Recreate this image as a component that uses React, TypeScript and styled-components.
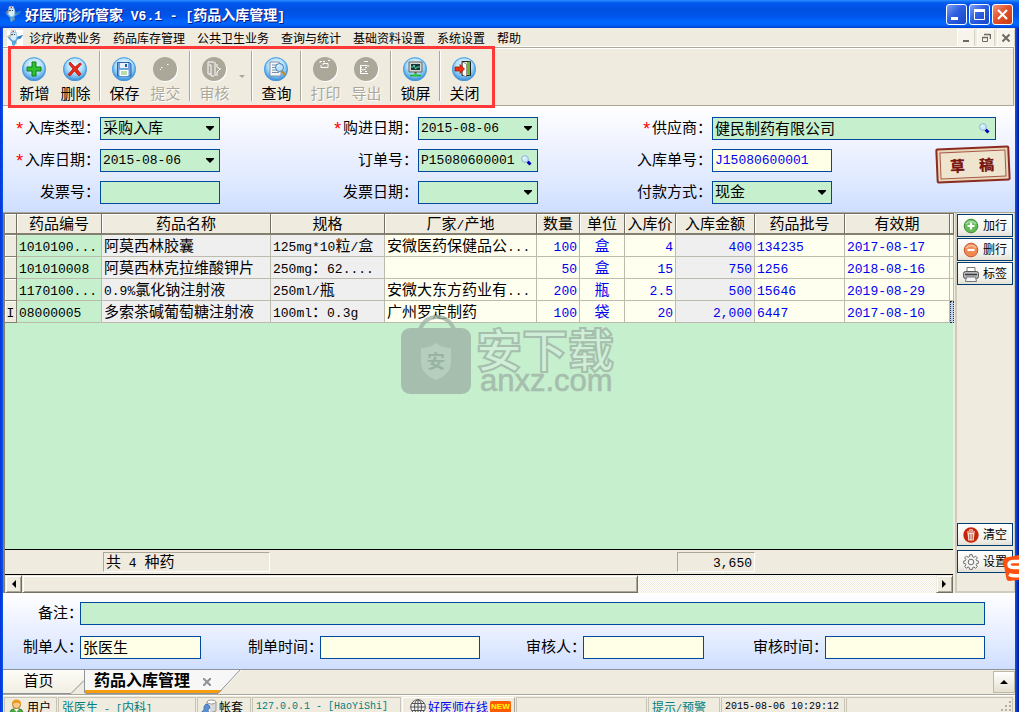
import React from "react";
import styled, { createGlobalStyle, css } from "styled-components";

const CJK = `"Noto Sans CJK SC", sans-serif`;
const MONO = `"Liberation Mono", "Noto Sans CJK SC", monospace`;
const GREEN = "#c6efce";
const CREAM = "#ffffe7";
const FACE = "#efebde";
const NAVY = "#00499c";

const Global = createGlobalStyle`
  * { box-sizing: border-box; }
  body { margin: 0; font-family: ${CJK}; font-size: 15px; color: #000; }
  button, input, select { font: inherit; color: inherit; margin: 0; padding: 0; border: 0; background: none; border-radius: 0; }
  svg { display: block; flex: none; }
`;

/* ---------- window frame ---------- */
const Window = styled.div`
  position: relative;
  display: flex;
  flex-direction: column;
  height: 100vh;
  min-height: 600px;
  overflow: hidden;
  background: linear-gradient(90deg, #0831d9, #0855e8 3px, #0855e8 calc(100% - 4px), #0a48e0 calc(100% - 3px), #00138c);
`;
const TitleBar = styled.header`
  display: flex;
  align-items: center;
  height: 28px;
  padding: 0 6px 0 5px;
  gap: 4px;
  background: linear-gradient(#2a8cff, #0058ee 3px, #0050e0 9px, #0055ea 16px, #0066ff 22px, #0062fa 25px, #003dd0);
`;
const Title = styled.h1`
  flex: 1;
  margin: 0;
  font-size: 14px;
  line-height: 22px;
  font-weight: 700;
  color: #fff;
  text-shadow: 1px 1px 0 #0a1883;
  white-space: pre;
`;
const TitleButtons = styled.div`
  display: flex;
  gap: 2px;
`;
const TitleButton = styled.button<{ $red?: boolean }>`
  display: grid;
  place-items: center;
  width: 21px;
  height: 21px;
  border: 1px solid #fff;
  border-radius: 3px;
  background: ${(p) =>
    p.$red
      ? "linear-gradient(135deg, #f0977c, #e2532e 45%, #c83a10)"
      : "linear-gradient(135deg, #7d9ff5, #2d5fe0 45%, #1746c8)"};
`;
const Body = styled.div`
  flex: 1;
  min-height: 0;
  display: flex;
  flex-direction: column;
  margin: 0 4px 0 3px;
  background: ${FACE};
`;

/* ---------- menu and toolbar ---------- */
const MenuBar = styled.nav`
  display: flex;
  align-items: center;
  height: 19px;
  padding-left: 4px;
  gap: 6px;
  font-size: 12px;
`;
const MenuItems = styled.div`
  flex: 1;
  display: flex;
  gap: 12px;
`;
const MenuItem = styled.button`
  line-height: 18px;
  white-space: nowrap;
`;
const MdiButtons = styled.div`
  display: flex;
  gap: 2px;
`;
const MdiButton = styled.button`
  display: grid;
  place-items: center;
  width: 18px;
  height: 18px;
  background: #f7f4ec;
  border: 1px solid;
  border-color: #fff #d6d2c4 #d6d2c4 #fff;
`;
const Toolbar = styled.div`
  display: flex;
  height: 59px;
  margin-right: 1px;
  padding: 3px 11px;
  border: 1px solid #aca899;
  border-left: 0;
  box-shadow: inset 0 1px #fff, 0 -1px #fff;
`;
const ToolButton = styled.button`
  display: flex;
  flex-direction: column;
  align-items: center;
  width: 41px;
  padding-top: 6px;
  gap: 1px;
  line-height: 20px;
  &:disabled { color: #aca899; text-shadow: 1px 1px #fff; }
`;
const ToolArrow = styled.button`
  width: 13px;
  display: grid;
  place-items: center;
`;
const Separator = styled.div`
  width: 8px;
  height: 50px;
  &::before {
    content: "";
    display: block;
    width: 2px;
    height: 100%;
    margin-left: 3px;
    background: linear-gradient(90deg, #aca899 50%, #fff 50%);
  }
`;
const Highlight = styled.div`
  position: absolute;
  left: 8px;
  top: 46px;
  width: 487px;
  height: 62px;
  border: 3px solid #ff3838;
  pointer-events: none;
  z-index: 3;
`;

/* ---------- forms ---------- */
const formShade = css`
  background: linear-gradient(#fff, #eef2ff 40%, #dde8ff 75%, #cedeff);
`;
const HeadForm = styled.form`
  ${formShade}
  position: relative;
  display: grid;
  grid-template-columns: 97px 120px 198px 120px 174px minmax(120px, 1fr);
  grid-auto-rows: 23px;
  row-gap: 9px;
  padding: 11px 19px 8px 0;
`;
const Label = styled.label`
  display: flex;
  justify-content: flex-end;
  line-height: 20px;
  white-space: nowrap;
`;
const Star = styled.span`
  color: #f00;
  font-family: ${MONO};
  font-size: 18px;
  line-height: 26px;
`;
const Box = styled.div<{ $cream?: boolean; $narrow?: boolean }>`
  display: flex;
  align-items: center;
  height: 23px;
  width: ${(p) => (p.$narrow ? "120px" : "auto")};
  min-width: 0;
  padding: 0 5px 0 2px;
  border: 1px solid ${NAVY};
  background: ${(p) => (p.$cream ? CREAM : GREEN)};
`;
const boxText = css<{ $mono?: boolean; $blue?: boolean }>`
  flex: 1;
  min-width: 0;
  width: 0;
  height: 21px;
  padding-bottom: ${(p) => (p.$mono ? 0 : 3)}px;
  line-height: 18px;
  outline: none;
  font-family: ${(p) => (p.$mono ? MONO : CJK)};
  font-size: ${(p) => (p.$mono ? "13px" : "15px")};
  color: ${(p) => (p.$blue ? "#0000f0" : "#000")};
`;
const TextInput = styled.input`${boxText}`;
const Select = styled.select`
  ${boxText}
  appearance: none;
`;
const IconButton = styled.button`
  display: grid;
  place-items: center;
`;
const Stamp = styled.svg`
  position: absolute;
  right: 3px;
  top: 38px;
`;
const FootForm = styled.form`
  ${formShade}
  display: grid;
  grid-template-columns: 77px 121px 119px 160px 103px 121px 121px minmax(120px, 1fr);
  grid-auto-rows: 23px;
  row-gap: 11px;
  padding: 9px 30px 10px 0;
  ${Label} { margin-right: -3px; }
`;
const Wide = styled.div`
  grid-column: 2 / -1;
`;

/* ---------- data grid ---------- */
const Work = styled.div`
  flex: 1;
  min-height: 0;
  display: flex;
  gap: 2px;
  border-top: 1px solid #aca899;
`;
const GridPane = styled.div`
  position: relative;
  flex: 1;
  min-width: 0;
  display: flex;
  flex-direction: column;
  border-left: 2px solid #848070;
  background: ${GREEN};
`;
const Table = styled.table`
  width: 100%;
  table-layout: fixed;
  border-collapse: separate;
  border-spacing: 0;
`;
const Th = styled.th`
  height: 22px;
  padding: 0;
  font-weight: 400;
  line-height: 18px;
  vertical-align: top;
  white-space: nowrap;
  overflow: hidden;
  background: ${FACE};
  border-top: 1px solid #736f63;
  border-right: 1px solid #736f63;
  border-bottom: 2px solid #848070;
  box-shadow: inset 1px 1px #fff;
`;
type Tone = "green" | "grey" | "cream" | "face";
const tones: Record<Tone, string> = { green: GREEN, grey: "#efefef", cream: "#fffff0", face: FACE };
const Td = styled.td<{ $tone: Tone; $blue?: boolean; $align?: "left" | "right" | "center" }>`
  height: 22px;
  padding: 0 2px;
  line-height: 20px;
  vertical-align: top;
  white-space: nowrap;
  overflow: hidden;
  background: ${(p) => tones[p.$tone]};
  color: ${(p) => (p.$blue ? "#0000f0" : "#000")};
  text-align: ${(p) => p.$align ?? "left"};
  border-right: 1px solid ${(p) => (p.$tone === "face" ? "#848070" : "#bdbaae")};
  border-bottom: 1px solid ${(p) => (p.$tone === "face" ? "#848070" : "#bdbaae")};
  ${(p) => p.$tone === "face" && "box-shadow: inset 1px 1px #fff; padding: 0;"}
`;
const TailTd = styled(Td)<{ $focus: boolean }>`
  padding: 0;
  ${(p) => p.$focus && "background: #b9d2f7; border: 1px dotted #31312a;"}
`;
const Latin = styled.span<{ $size?: number }>`
  font-family: ${MONO};
  font-size: ${(p) => p.$size ?? 13}px;
  line-height: 0;
  white-space: pre;
`;
const Totals = styled.div`
  display: grid;
  grid-template-columns: 98px 167px 407px 78px 1fr;
  height: 26px;
  margin-top: auto;
  padding-top: 2px;
  border-top: 1px solid #000;
  border-bottom: 1px solid #000;
  background: ${FACE};
`;
const Total = styled.div<{ $col: number; $right?: boolean }>`
  grid-column: ${(p) => p.$col};
  height: 20px;
  padding: 0 2px;
  line-height: 16px;
  text-align: ${(p) => (p.$right ? "right" : "left")};
  border: 1px solid;
  border-color: #aca899 #fff #fff #aca899;
`;
const ScrollBar = styled.div`
  display: flex;
  height: 18px;
  background: repeating-conic-gradient(#fff 0 25%, ${FACE} 0 50%) 0 0 / 2px 2px;
`;
const raised = css`
  background: ${FACE};
  border: 1px solid;
  border-color: ${FACE} #736f63 #736f63 ${FACE};
  box-shadow: inset 1px 1px #fff, inset -1px -1px #aca899;
`;
const ScrollArrow = styled.button`
  ${raised}
  display: grid;
  place-items: center;
  width: 17px;
`;
const Thumb = styled.div`
  ${raised}
  width: 65%;
`;
const Gap = styled.div`
  flex: 1;
`;
const Side = styled.aside`
  display: flex;
  flex-direction: column;
  gap: 1px;
  width: 60px;
  padding: 1px 1px 18px 0;
  border-left: 2px solid #cfcbbd;
  border-right: 1px solid #cfcbbd;
  border-bottom: 2px solid #cfcbbd;
`;
const SideButton = styled.button<{ $bottom?: boolean }>`
  display: flex;
  align-items: center;
  height: 23px;
  padding-left: 5px;
  gap: 4px;
  font-size: 12px;
  line-height: 18px;
  white-space: nowrap;
  border: 1px solid #003c74;
  background: linear-gradient(#fff, #f3f2ec 70%, #e4e1d5);
  margin-top: ${(p) => (p.$bottom ? "auto" : "0")};
  margin-bottom: ${(p) => (p.$bottom ? "3px" : "0")};
`;
const SideText = styled.span`
  padding-bottom: 2px;
`;
const Watermark = styled.svg`
  position: absolute;
  left: 395px;
  top: 101px;
  pointer-events: none;
`;
const ImeBadge = styled.svg`
  position: absolute;
  right: 0;
  bottom: 130px;
  z-index: 3;
`;

/* ---------- document tabs and status bar ---------- */
const Tabs = styled.div`
  position: relative;
  display: flex;
  height: 25px;
  border-top: 1px solid #8e949c;
`;
const HomeTab = styled.button`
  width: 81px;
  padding: 0 10px 4px 0;
  line-height: 20px;
  background: linear-gradient(#fdfcf6, #f1eee2);
  clip-path: polygon(0 0, 100% 0, 100% 9px, 68px 23px, 0 23px);
`;
const ActiveTab = styled.div`
  display: flex;
  align-items: flex-start;
  width: 158px;
  padding-left: 9px;
  gap: 13px;
  border-left: 1px solid #8e949c;
  background: linear-gradient(#f7f7f7 20px, #f89c10 20px);
  clip-path: polygon(0 0, 100% 0, 135px 23px, 0 23px);
`;
const TabName = styled.button`
  font-size: 16px;
  font-weight: 700;
  line-height: 18px;
  white-space: nowrap;
`;
const TabClose = styled.button`
  padding-top: 8px;
`;
const TabEdges = styled.svg`
  position: absolute;
  left: 0;
  top: 0;
  pointer-events: none;
`;
const TabMenu = styled.button`
  display: grid;
  place-items: center;
  width: 22px;
  height: 22px;
  margin: 1px 0 0 auto;
  border: 1px solid #bdb9aa;
  background: linear-gradient(#fff, #e4e0d0);
`;
const StatusBar = styled.footer`
  display: grid;
  grid-template-columns: 53px 138px 54px 149px 113px 131px 72px 124px 1fr;
  column-gap: 1px;
  height: 18px;
  padding: 2px 2px 0 1px;
  overflow: hidden;
  border-top: 1px solid #aca899;
  box-shadow: inset 0 1px #fff;
  font-size: 12px;
`;
const Status = styled.div<{ $teal?: boolean; $raised?: boolean }>`
  display: flex;
  align-items: center;
  height: 19px;
  padding-left: ${(p) => (p.$raised ? 7 : 3)}px;
  gap: 2px;
  line-height: 16px;
  white-space: nowrap;
  color: ${(p) => (p.$teal ? "#008080" : "#000")};
  border: 1px solid;
  border-color: ${(p) => (p.$raised ? "#fff #aca899 #aca899 #fff" : "#c9c5b6")};
`;
const OnlineLink = styled.a`
  color: #0000f0;
  text-decoration: none;
`;
const NewTag = styled.span`
  height: 12px;
  padding: 0 1px;
  border-radius: 2px;
  background: #ff5a00;
  color: #ff0;
  font: 700 8px/12px "Liberation Sans", sans-serif;
`;
const Grip = styled.svg`
  margin-left: auto;
`;

/* ---------- drawings ---------- */
const Bird = ({ boxed }: { boxed?: boolean }) => (
  <svg width="16" height="16" viewBox="0 0 16 16">
    {boxed && <rect width="16" height="16" fill="#fff" />}
    <path d="M0 6l5 2 5-1 6-2-2 3-4 2-1 3-2 3-2-1v-3L2 9z" fill="#4f9fd6" />
    <path d="M4 2h5l1 4-1 4-3 1-3-3z" fill="#d9edf9" stroke="#7fb4dc" strokeWidth=".7" />
    <path d="M4 .5h4.500v2H4z" fill="#fff" stroke="#8caac0" strokeWidth=".6" />
    <path d="M5.500 1.500h1.500" stroke="#e22" />
    <path d="M3.500 4.500L1 6l2.500.7z" fill="#f0a020" />
    <path d="M10 7l6-2-3 4z" fill="#2f7cc0" />
    <path d="M6.500 12v3.500M9 12v2.500" stroke="#c9a23a" fill="none" />
    <circle cx="5" cy="4.500" r=".8" fill="#123" />
    <circle cx="7.500" cy="4.500" r=".6" fill="#123" />
  </svg>
);

const Caret = () => (
  <svg width="8" height="5" viewBox="0 0 8 5"><path d="M0 0h8v1l-4 4-4-4z" fill="#000" /></svg>
);

const Lens = () => (
  <svg width="11" height="11" viewBox="0 0 11 11">
    <path d="M6.500 6.500l3 3" stroke="#0000b8" strokeWidth="3" />
    <circle cx="4" cy="4" r="3.400" fill="#cdeafa" stroke="#8fb6d6" />
    <path d="M2.500 4q0-1.500 1.500-1.800" stroke="#fff" fill="none" />
  </svg>
);

type Glyph = "add" | "del" | "save" | "submit" | "audit" | "query" | "print" | "export" | "lock" | "close";
const glyphs: Record<Glyph, React.ReactNode> = {
  add: <path d="M10 5h4v5h5v4h-5v5h-4v-5H5v-4h5z" fill="#2fc02f" stroke="#0c7d1c" />,
  del: <path d="M7 5l5 5 5-4 1.500 1-4.500 5 4 5-2 2-4.500-5L7 19l-2-1.500 5-5.500-4-5z" fill="#f02818" stroke="#a80c04" strokeWidth=".7" />,
  save: (
    <g>
      <path d="M5.500 5.500h12l1.500 1.500v12H5.500z" fill="#6fa3df" stroke="#2a62ad" />
      <path d="M8 6h8v5H8z" fill="#e6f0fb" />
      <path d="M13 7h2v3h-2z" fill="#2c5b9d" />
      <path d="M7.500 13h9v6h-9z" fill="#fff" />
      <path d="M9 15h6M9 17h6" stroke="#6fba50" />
    </g>
  ),
  submit: <path d="M8 10.500h1.500M14 7.500h1.500M7 12.500h1" stroke="#fff" />,
  audit: <path d="M12 5H6v12h3M7 8h2v11h3M13 5v14M15 7v3l3 2-3 3v4M18 12h1" stroke="#fff" fill="none" />,
  query: (
    <g>
      <path d="M6 5h9l2 2v12H6z" fill="#f4f6f8" stroke="#6d7f92" strokeWidth=".8" />
      <path d="M8 8h5M8 10.500h4M8 13h6M8 15.500h7" stroke="#7890a8" />
      <path d="M18 14l3 4" stroke="#c58a28" strokeWidth="2.400" />
      <circle cx="15.500" cy="10.500" r="4" fill="#bce3fa" stroke="#4a7fae" />
      <path d="M13.500 10q.5-2 2-2" stroke="#fff" fill="none" />
    </g>
  ),
  print: <path d="M7 6V4.500h2M10 4.500h2M15 3.500h2M8 8v2.500h7V6.500h-5V8" stroke="#fff" fill="none" />,
  export: <path d="M10 4.500h4M6 8.500h7M14 8v2M6 10.500h2M11 10.500h2M7 12l2 1 3-1M6 14.500h2M11 14.500h2M6 16.500h8M6.500 8v8" stroke="#fff" fill="none" />,
  lock: (
    <g>
      <path d="M6 5h13v10H6z" fill="#d6d6d0" stroke="#5c6266" />
      <path d="M8 7h9v6H8z" fill="#17383a" />
      <path d="M8 10h2l1-2 1.500 4 1.500-2h3" stroke="#5fe6b4" fill="none" strokeWidth=".9" />
      <path d="M12.500 15v3" stroke="#555" strokeWidth="2" />
      <path d="M7 18.500h11" stroke="#18a82c" strokeWidth="1.500" />
      <circle cx="12.500" cy="18" r="1.700" fill="#2fcf3f" />
    </g>
  ),
  close: (
    <g>
      <path d="M10 4.500h8.500v14H10z" fill="#e8f0e4" stroke="#222" />
      <path d="M15 5l3-.5v14l-3-1z" fill="#6cb43c" />
      <path d="M10.500 5l4 2v13l-4-2z" fill="#f7f9f4" stroke="#555" strokeWidth=".6" />
      <path d="M3 10h5V7.500l4.500 4.500L8 16.500V14H3z" fill="#f03010" stroke="#8c1404" strokeWidth=".7" />
    </g>
  ),
};

const ToolIcon = ({ name, off }: { name: Glyph; off?: boolean }) => (
  <svg width="25" height="25" viewBox="0 0 25 25">
    <defs>
      <radialGradient id={`orb-${name}`} cx=".5" cy=".35" r=".65">
        <stop offset="0" stopColor="#f2fbff" />
        <stop offset=".5" stopColor="#b5e0fa" />
        <stop offset=".8" stopColor="#63b0ea" />
        <stop offset="1" stopColor="#2878c8" />
      </radialGradient>
    </defs>
    {off && <circle cx="13" cy="13" r="12" fill="#fff" />}
    <circle cx="12" cy="12" r="12" fill={off ? "#aca899" : `url(#orb-${name})`} />
    {!off && <circle cx="12" cy="12" r="11.300" fill="none" stroke="#4a9de0" />}
    {glyphs[name]}
  </svg>
);

const RoundSign = ({ color, plus }: { color: string; plus?: boolean }) => (
  <svg width="16" height="16" viewBox="0 0 16 16">
    <circle cx="8" cy="8" r="6.800" fill={color} stroke={plus ? "#3c8f35" : "#c8552a"} />
    <path d="M3 6q5-5 10 0" stroke="#fff" strokeOpacity=".4" fill="none" strokeWidth="2" />
    <path d={plus ? "M4.500 8h7M8 4.500v7" : "M4.500 8h7"} stroke="#fff" strokeWidth="2.200" />
  </svg>
);
const Printer = () => (
  <svg width="16" height="16" viewBox="0 0 16 16">
    <path d="M4 6V1.500h8V6" fill="#fff" stroke="#777" />
    <rect x=".5" y="5.500" width="15" height="7" rx="2" fill="#b4b6b8" stroke="#555" />
    <path d="M2 8.500h12" stroke="#3c3c3c" strokeWidth="1.500" />
    <path d="M3.500 11h9l1 4.500h-11z" fill="#f5f5f5" stroke="#777" />
  </svg>
);
const Bin = () => (
  <svg width="16" height="16" viewBox="0 0 16 16">
    <circle cx="8" cy="8" r="7.700" fill="#c82408" />
    <path d="M4.500 6h7l-.8 7.500H5.300z" fill="#f6e2da" />
    <path d="M4 5h8M6 3.500q2-1.500 4 0" stroke="#fff" strokeWidth="1.200" fill="none" />
    <path d="M6.500 7v5.500M8 7v5.500M9.500 7v5.500" stroke="#b05038" strokeWidth=".7" />
  </svg>
);
const Cog = () => (
  <svg width="16" height="16" viewBox="0 0 16 16" fill="none" stroke="#6b6b6b">
    <path d="M6.800.7h2.400l.4 2 1.300.6 1.700-1.200 1.700 1.700-1.200 1.700.6 1.300 2 .4v1.900l-2 .4-.6 1.300 1.200 1.700-1.700 1.700-1.700-1.200-1.300.6-.4 2H6.800l-.4-2-1.300-.6-1.700 1.200-1.700-1.700 1.200-1.700-.6-1.300-2-.4V7.200l2-.4.6-1.300-1.200-1.700 1.700-1.700 1.700 1.200 1.300-.6z" fill="#f4f4f4" />
    <circle cx="8" cy="8" r="2.800" />
  </svg>
);
const Person = () => (
  <svg width="17" height="16" viewBox="-1 0 17 16">
    <path d="M1 15q0-5 4-5h5q4 0 4 5z" fill="#48a83c" stroke="#2c7a28" />
    <path d="M5 10l2.500 3L10 10z" fill="#fff" />
    <circle cx="7.500" cy="5.500" r="4" fill="#f8c98c" stroke="#c07818" />
    <path d="M3 5q0-4.500 4.500-4.500T12 5Q8 2.500 3 5z" fill="#eb9a1c" />
  </svg>
);
const Database = () => (
  <svg width="16" height="16" viewBox="0 0 16 16">
    <path d="M6 3v9q4 3 9 0V3z" fill="#d6d8da" stroke="#9a9a9a" />
    <path d="M8 4v9" stroke="#fff" strokeWidth="2" />
    <ellipse cx="10.500" cy="3" rx="4.500" ry="2" fill="#fff" stroke="#999" />
    <path d="M5 5q4 0 4 4l-2 2 2 5H0q0-4 3-5-1-4 2-6z" fill="#5a8fd4" stroke="#315f9f" strokeWidth=".6" />
  </svg>
);
const Globe = () => (
  <svg width="16" height="16" viewBox="0 0 16 16" fill="none" stroke="#555">
    <circle cx="8" cy="8" r="7.300" fill="#f3f3f3" />
    <ellipse cx="8" cy="8" rx="3.500" ry="7.300" />
    <path d="M8 .7v14.600M.7 8h14.600M2 4.500h12M2 11.500h12" />
  </svg>
);

/* Latin runs sit in a narrow monospaced face beside the square characters. */
const Mixed = ({ text, size }: { text: string; size?: number }) => (
  <>
    {text.split(/([\x20-\x7e]+)/).map((run, i) =>
      i % 2 ? <Latin key={i} $size={size}>{run}</Latin> : run
    )}
  </>
);

/* ---------- fields ---------- */
type FieldProps = {
  id: string;
  label: string;
  value?: string;
  required?: boolean;
  kind?: "text" | "select" | "date" | "lookup";
  cream?: boolean;
  blue?: boolean;
  mono?: boolean;
  narrow?: boolean;
};
const Field = ({ id, label, value = "", required, kind = "text", cream, blue, mono, narrow = true }: FieldProps) => (
  <>
    <Label htmlFor={id}>
      {required && <Star>*</Star>}
      {label}：
    </Label>
    <Box $cream={cream} $narrow={narrow}>
      {kind === "select" ? (
        <Select id={id} defaultValue={value}><option>{value}</option></Select>
      ) : (
        <TextInput id={id} defaultValue={value} $mono={mono} $blue={blue} />
      )}
      {kind === "select" && <Caret />}
      {kind === "date" && <IconButton type="button" aria-label={`选择${label}`}><Caret /></IconButton>}
      {kind === "lookup" && <IconButton type="button" aria-label={`查找${label}`}><Lens /></IconButton>}
    </Box>
  </>
);

/* ---------- data ---------- */
const menus = ["诊疗收费业务", "药品库存管理", "公共卫生业务", "查询与统计", "基础资料设置", "系统设置", "帮助"];

type Tool = { text: string; icon: Glyph; off?: boolean; menu?: boolean };
const toolGroups: Tool[][] = [
  [{ text: "新增", icon: "add" }, { text: "删除", icon: "del" }],
  [{ text: "保存", icon: "save" }, { text: "提交", icon: "submit", off: true }],
  [{ text: "审核", icon: "audit", off: true, menu: true }],
  [{ text: "查询", icon: "query" }],
  [{ text: "打印", icon: "print", off: true }, { text: "导出", icon: "export", off: true }],
  [{ text: "锁屏", icon: "lock" }],
  [{ text: "关闭", icon: "close" }],
];

const widths = [12, 85, 169, 114, 152, 43, 45, 51, 79, 90, 105, 4];
const heads = ["", "药品编号", "药品名称", "规格", "厂家/产地", "数量", "单位", "入库价", "入库金额", "药品批号", "有效期", ""];
const rows = [
  ["1010100...", "阿莫西林胶囊", "125mg*10粒/盒", "安微医药保健品公...", "100", "盒", "4", "400", "134235", "2017-08-17"],
  ["101010008", "阿莫西林克拉维酸钾片", "250mg：62....", "", "50", "盒", "15", "750", "1256", "2018-08-16"],
  ["1170100...", "0.9%氯化钠注射液", "250ml/瓶", "安微大东方药业有...", "200", "瓶", "2.5", "500", "15646", "2019-08-29"],
  ["08000005", "多索茶碱葡萄糖注射液", "100ml：0.3g", "广州罗定制药", "100", "袋", "20", "2,000", "6447", "2017-08-10"],
];
const colTone: Tone[] = ["green", "grey", "grey", "cream", "cream", "cream", "cream", "grey", "cream", "cream"];
const colAlign = ["left", "left", "left", "left", "right", "center", "right", "right", "left", "left"] as const;

export default function App() {
  return (
    <Window>
      <Global />
      <TitleBar>
        <Bird />
        <Title>好医师诊所管家<Latin> V6.1 - [</Latin>药品入库管理<Latin>]</Latin></Title>
        <TitleButtons>
          <TitleButton aria-label="最小化">
            <svg width="13" height="13"><path d="M1 10.500h7" stroke="#fff" strokeWidth="3" /></svg>
          </TitleButton>
          <TitleButton aria-label="最大化">
            <svg width="13" height="13"><path d="M1.500 2v9.500h10V2" fill="none" stroke="#fff" /><path d="M1 2.500h11" stroke="#fff" strokeWidth="3" /></svg>
          </TitleButton>
          <TitleButton $red aria-label="关闭窗口">
            <svg width="13" height="13"><path d="M2 2l9 9M11 2l-9 9" stroke="#fff" strokeWidth="2.200" /></svg>
          </TitleButton>
        </TitleButtons>
      </TitleBar>
      <Body>
        <MenuBar>
          <Bird boxed />
          <MenuItems>{menus.map((m) => <MenuItem key={m}>{m}</MenuItem>)}</MenuItems>
          <MdiButtons>
            <MdiButton aria-label="最小化文档">
              <svg width="10" height="10"><path d="M2 8h6" stroke="#6b6b60" strokeWidth="2" /></svg>
            </MdiButton>
            <MdiButton aria-label="还原文档">
              <svg width="10" height="10" fill="none" stroke="#6b6b60"><path d="M3 1.500h6M9.500 1v5M1 4.500h6" strokeWidth="1.600" /><path d="M1.500 4v4.500h5V4" /></svg>
            </MdiButton>
            <MdiButton aria-label="关闭文档">
              <svg width="10" height="10"><path d="M1.500 1.500l7 7M8.500 1.500l-7 7" stroke="#6b6b60" strokeWidth="2" /></svg>
            </MdiButton>
          </MdiButtons>
        </MenuBar>

        <Toolbar role="toolbar">
          {toolGroups.map((group, g) => (
            <React.Fragment key={g}>
              {g > 0 && <Separator />}
              {group.map((t) => (
                <React.Fragment key={t.text}>
                  <ToolButton disabled={t.off}><ToolIcon name={t.icon} off={t.off} />{t.text}</ToolButton>
                  {t.menu && (
                    <ToolArrow disabled aria-label="更多">
                      <svg width="6" height="4"><path d="M0 0h6L3 3z" fill="#aca899" /></svg>
                    </ToolArrow>
                  )}
                </React.Fragment>
              ))}
            </React.Fragment>
          ))}
        </Toolbar>

        <HeadForm>
          <Field id="type" label="入库类型" value="采购入库" required kind="select" />
          <Field id="bought" label="购进日期" value="2015-08-06" required kind="date" mono />
          <Field id="supplier" label="供应商" value="健民制药有限公司" required kind="lookup" narrow={false} />
          <Field id="date" label="入库日期" value="2015-08-06" required kind="date" mono />
          <Field id="order" label="订单号" value="P15080600001" kind="lookup" mono />
          <Field id="number" label="入库单号" value="J15080600001" cream blue mono />
          <Field id="invoice" label="发票号" />
          <Field id="invoiceDate" label="发票日期" kind="date" />
          <Field id="pay" label="付款方式" value="现金" kind="select" />
          <Stamp width="78" height="42" viewBox="0 0 78 42">
            <g transform="rotate(-2.500 39 21)">
              <rect x="2" y="3" width="74" height="35" rx="2" fill="#8c2a20" />
              <rect x="4" y="5" width="70" height="31" fill="#e8d8b8" />
              <rect x="6.500" y="7.500" width="65" height="26" fill="#efe5cf" stroke="#a8584a" />
              <text x="16" y="27" fontSize="15" fontWeight="900" fill="#7a1712" fontFamily={CJK}>草</text>
              <text x="45" y="27" fontSize="15" fontWeight="900" fill="#7a1712" fontFamily={CJK}>稿</text>
            </g>
          </Stamp>
        </HeadForm>

        <Work>
          <GridPane>
            <Table>
              <colgroup>{widths.map((w, i) => <col key={i} width={w} />)}</colgroup>
              <thead>
                <tr>{heads.map((h, i) => <Th key={i}><Mixed text={h} /></Th>)}</tr>
              </thead>
              <tbody>
                {rows.map((r, n) => (
                  <tr key={n}>
                    <Td $tone="face" $align="center">{n === 3 && <Latin>I</Latin>}</Td>
                    {r.map((c, i) => (
                      <Td key={i} $tone={colTone[i]} $align={colAlign[i]} $blue={i > 3}><Mixed text={c} /></Td>
                    ))}
                    <TailTd $tone="cream" $focus={n === 3} />
                  </tr>
                ))}
              </tbody>
            </Table>
            <Watermark width="230" height="90" viewBox="0 0 230 90">
              <g opacity=".8">
                <path d="M19 18Q24 3 37 3T55 18" fill="none" stroke="#9fb3a6" strokeWidth="4" />
                <rect x="1" y="14" width="70" height="66" rx="9" fill="#9fb3a6" />
                <path d="M21 34q9 0 15-5 6 5 15 5v14q0 12-15 18-15-6-15-18z" fill="#b3c6ba" />
                <text x="27" y="54" fontSize="18" fontWeight="700" fill="#8fa597" fontFamily={CJK}>安</text>
                <text x="76" y="53" fontSize="46" fontWeight="700" fill="#d2f0da" stroke="#9fb3a6" strokeWidth="2" fontFamily={CJK}>安下载</text>
                <text x="80" y="77" fontSize="31" fill="#9fb3a6" stroke="#9fb3a6" strokeWidth=".6" fontFamily="Liberation Sans, sans-serif">anxz.com</text>
              </g>
            </Watermark>
            <Totals>
              <Total $col={2}><Mixed text="共 4 种药" /></Total>
              <Total $col={4} $right><Mixed text="3,650" /></Total>
            </Totals>
            <ScrollBar>
              <ScrollArrow aria-label="向左滚动"><svg width="5" height="8"><path d="M5 0v8L1 4z" /></svg></ScrollArrow>
              <Thumb />
              <Gap />
              <ScrollArrow aria-label="向右滚动"><svg width="5" height="8"><path d="M0 0v8l4-4z" /></svg></ScrollArrow>
            </ScrollBar>
          </GridPane>
          <Side>
            <SideButton><RoundSign color="#63bb58" plus /><SideText>加行</SideText></SideButton>
            <SideButton><RoundSign color="#f08850" /><SideText>删行</SideText></SideButton>
            <SideButton><Printer /><SideText>标签</SideText></SideButton>
            <SideButton $bottom><Bin /><SideText>清空</SideText></SideButton>
            <SideButton><Cog /><SideText>设置</SideText></SideButton>
          </Side>
        </Work>

        <FootForm>
          <Label htmlFor="note">备注：</Label>
          <Wide><Box><TextInput id="note" defaultValue="" /></Box></Wide>
          <Field id="maker" label="制单人" value="张医生" cream narrow={false} />
          <Field id="madeAt" label="制单时间" cream narrow={false} />
          <Field id="auditor" label="审核人" cream narrow={false} />
          <Field id="auditedAt" label="审核时间" cream narrow={false} />
        </FootForm>

        <Tabs>
          <HomeTab>首页</HomeTab>
          <ActiveTab>
            <TabName>药品入库管理</TabName>
            <TabClose aria-label="关闭标签页">
              <svg width="8" height="8"><path d="M0 0l8 8M8 0L0 8" stroke="#8c9298" strokeWidth="2" /></svg>
            </TabClose>
          </ActiveTab>
          <TabEdges width="240" height="24" fill="none" stroke="#8e949c">
            <path d="M0 23.500h68l13-13" />
            <path d="M81 22l2 1.500h132L237 0" />
          </TabEdges>
          <TabMenu aria-label="标签页列表"><svg width="8" height="4"><path d="M0 4l4-4 4 4z" /></svg></TabMenu>
        </Tabs>

        <StatusBar>
          <Status><Person />用户</Status>
          <Status $teal><span><Mixed text="张医生 - [内科]" size={10} /></span></Status>
          <Status><Database />帐套</Status>
          <Status $teal><Mixed text="127.0.0.1 - [HaoYiShi]" size={10} /></Status>
          <Status $raised><Globe /><OnlineLink href="#">好医师在线</OnlineLink><NewTag>NEW</NewTag></Status>
          <Status />
          <Status $teal><span><Mixed text="提示/预警" size={10} /></span></Status>
          <Status><Mixed text="2015-08-06 10:29:12" size={10} /></Status>
          <Status>
            <Grip width="11" height="11" fill="#b5b1a2"><path d="M8 0h2v2H8zM4 4h2v2H4zM8 4h2v2H8zM0 8h2v2H0zM4 8h2v2H4zM8 8h2v2H8z" /></Grip>
          </Status>
        </StatusBar>
      </Body>
      <Highlight />
      <ImeBadge width="16" height="27" viewBox="0 0 16 27">
        <path d="M0 6Q0 3 3 2.500L16 0v25L6 26q-2 0-2.500-2z" fill="#ff5010" />
        <path d="M16 6.500h-5q-5 0-5 3t5 3h5M16 20.500q-6 1-10-1" fill="none" stroke="#fff" strokeWidth="3.500" />
      </ImeBadge>
    </Window>
  );
}
